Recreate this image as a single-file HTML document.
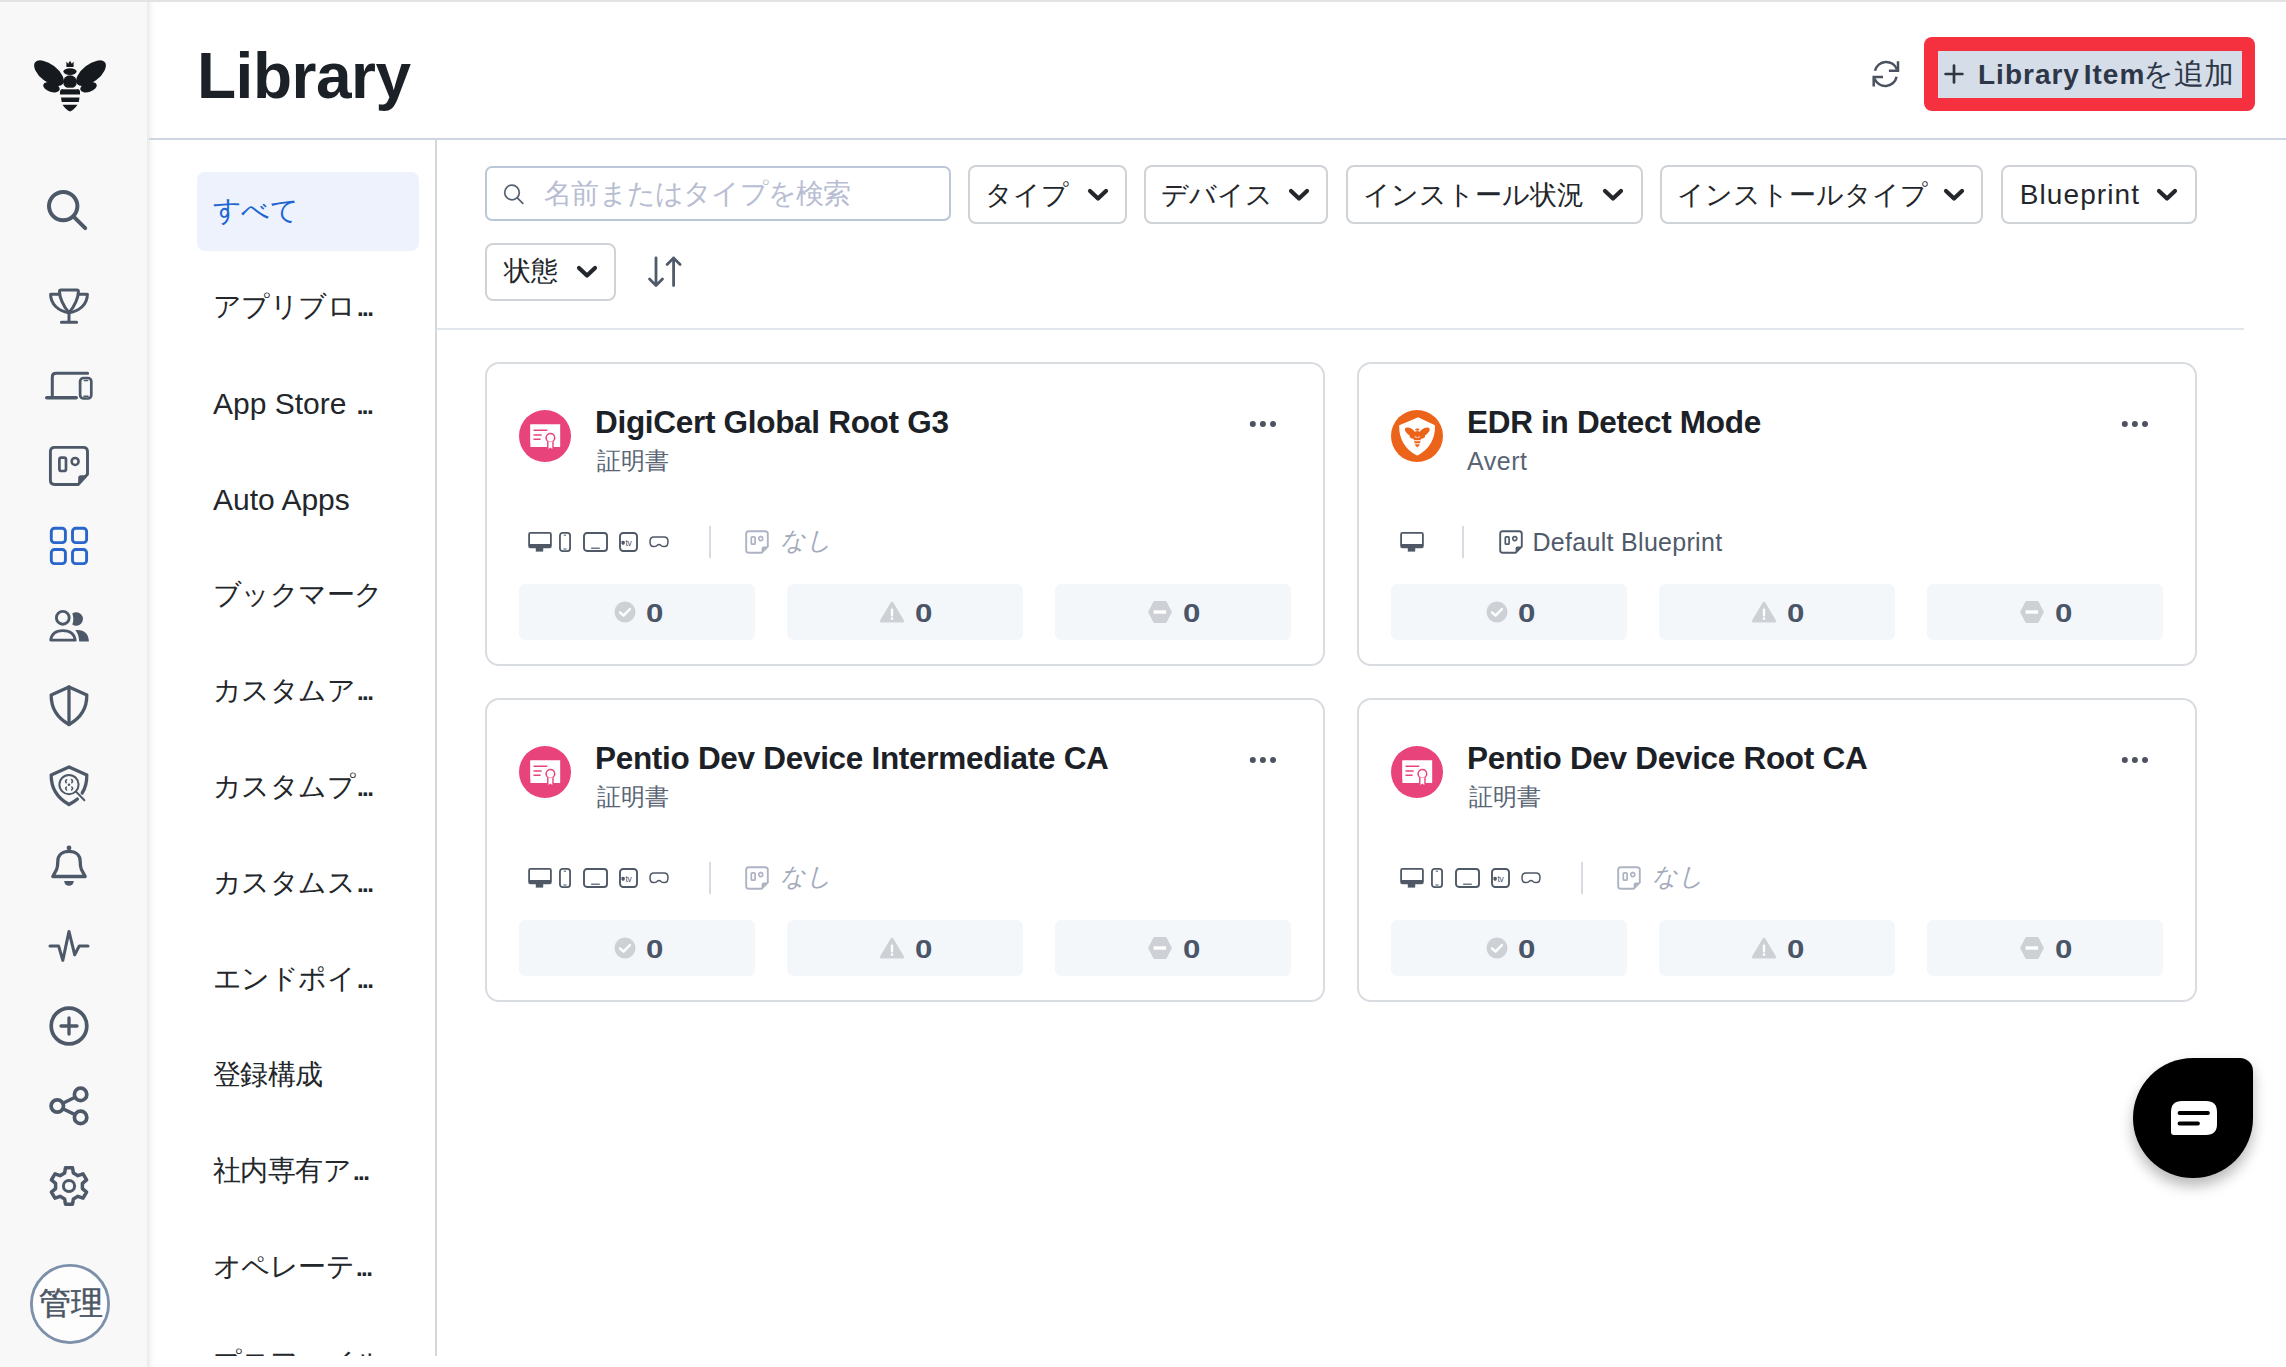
<!DOCTYPE html>
<html><head><meta charset="utf-8">
<style>
html,body{margin:0;padding:0}
body{width:2286px;height:1367px;overflow:hidden;position:relative;background:#fff;font-family:"Liberation Sans",sans-serif;color:#1f2328}
.abs{position:absolute}
#topline{left:0;top:0;width:2286px;height:2px;background:#e3e3e3}
#sidebar{left:0;top:2px;width:147px;height:1365px;background:#f8f8f8}
#sbshadow{left:147px;top:2px;width:8px;height:1365px;background:linear-gradient(to right,#e8e8e8 0,#f1f1f1 2px,#fafafa 5px,rgba(255,255,255,0) 8px)}
#sbsvg{position:absolute;left:0;top:0}
.ic{fill:none;stroke:#4d5868;stroke-linecap:round;stroke-linejoin:round}
.f{fill:#4d5868;stroke:none}
#hdrline{left:149px;top:138px;width:2137px;height:2px;background:#cdd6e0}
#title{left:197px;top:36px;font-size:64px;font-weight:bold;color:#1c2127;line-height:80px;letter-spacing:-0.5px}
#cats{left:149px;top:139px;width:287px;height:1217px;overflow:hidden}
#catline{left:435px;top:140px;width:2px;height:1216px;background:#d5d8db}
.cat{position:absolute;left:64px;font-size:27.8px;letter-spacing:-0.6px;line-height:40px;color:#23272b;white-space:nowrap}
.cat.lat{font-size:30px;letter-spacing:0}
.dots3{font-weight:bold;letter-spacing:-1.6px;font-size:24px;margin-left:2px}
#active{left:48px;top:33px;width:222px;height:79px;background:#edf2fd;border-radius:8px}

#refresh{position:absolute;left:1860px;top:50px}
#addbtn{left:1924px;top:37px;width:331px;height:74px;background:#f5303f;border-radius:8px}
#addbtn .in{position:absolute;left:14px;top:14px;width:304px;height:47px;background:#d5dde8}
#addbtn .tx{position:absolute;left:53px;top:10px;font-size:28px;font-weight:bold;color:#2d3748;line-height:40px;white-space:nowrap;letter-spacing:1px;word-spacing:-5px}
#addbtn .jp{font-weight:normal;font-size:29.5px;letter-spacing:-0.3px;margin-left:-2px}
#search{left:485.2px;top:166.4px;width:466px;height:55px;box-sizing:border-box;border:2px solid #b9c7d7;border-radius:7px}
#search .ph{position:absolute;left:57px;top:6px;font-size:28px;line-height:40px;color:#b7bdd2;white-space:nowrap;letter-spacing:-0.8px}
.dd{position:absolute;box-sizing:border-box;border:2px solid #cfd2d6;border-radius:8px}
.dd .t{position:absolute;left:15px;top:8px;font-size:27.4px;line-height:40px;color:#23272b;white-space:nowrap}
.dd svg{position:absolute;right:16.8px;top:21px}
#divider{left:437px;top:328px;width:1807px;height:2px;background:#e1e6ec}
.card{position:absolute;width:836px;height:300px;border:2px solid #d9dce1;border-radius:14px;background:#fff}
.ci{position:absolute;left:1px;top:1px;width:834px;height:298px}
.card .ttl{position:absolute;left:107px;top:33.2px;font-size:31.5px;font-weight:bold;color:#1c2127;line-height:48px;white-space:nowrap;letter-spacing:-0.3px}
.card .sub{position:absolute;left:109px;top:78px;font-size:24px;color:#596475;line-height:36px;white-space:nowrap}
.card .dots{position:absolute;left:759px;top:52px}
.card .devs{position:absolute;left:0;top:0}
.card .vdiv{position:absolute;left:222px;top:161px;width:2px;height:32px;background:#d6dce1}
.card .bp{position:absolute;left:296px;top:158px;font-size:26px;line-height:40px;white-space:nowrap}
.stat{position:absolute;top:219px;width:236px;height:56px;background:#f4f7fa;border-radius:6px}
.stat .n{position:absolute;top:9px;font-size:25px;font-weight:bold;color:#4a5568;line-height:40px;transform:scaleX(1.25);transform-origin:0 0}
#chat{left:2133px;top:1058px;width:120px;height:120px;background:#000;border-radius:60px 13px 60px 60px;box-shadow:0 8px 14px rgba(0,0,0,0.28)}
</style></head>
<body>
<div id="topline" class="abs"></div>
<div id="sidebar" class="abs"></div>
<div id="sbshadow" class="abs"></div>
<svg id="sbsvg" width="148" height="1367" viewBox="0 0 148 1367">
  <!-- bee logo -->
  <g fill="#16191d">
    <ellipse cx="49" cy="73.2" rx="17.6" ry="8.7" transform="rotate(38 49 73.2)"/>
    <ellipse cx="51.5" cy="87.2" rx="8.6" ry="4.7" transform="rotate(18 51.5 87.2)"/>
    <ellipse cx="91" cy="73.2" rx="17.6" ry="8.7" transform="rotate(-38 91 73.2)"/>
    <ellipse cx="88.5" cy="87.2" rx="8.6" ry="4.7" transform="rotate(-18 88.5 87.2)"/>
    <ellipse cx="70" cy="71.6" rx="6.6" ry="3.4"/>
    <circle cx="70" cy="82" r="6.8"/>
    <path d="M66.4 67 L66.4 61.5 L68.2 63.8 L70 60.8 L71.8 63.8 L73.6 61.5 L73.6 67 Z"/>
    <path d="M60 94.6 L60 92 Q60 89 63 89 L77 89 Q80 89 80 92 L80 94.6 Z"/>
    <path d="M61 97.4 H79.5 L78.8 101.9 H61.7 Z"/>
    <path d="M62.5 104.8 H77.5 Q74 110 70 111.5 Q66 110 62.5 104.8 Z"/>
  </g>
  <g stroke="#f7f7f8" stroke-width="1.6" fill="none">
    <path d="M63 88.5 L77 88.5"/>
  </g>
  <!-- search -->
  <g class="ic" stroke-width="4"><circle cx="63.2" cy="206.1" r="14.2"/><path d="M73.6 216.6 L85.2 228.1"/></g>
  <!-- trophy -->
  <g class="ic" stroke-width="3" transform="translate(38,275)">
    <path d="M31 37.8 C25 31 21.5 22 21.5 16.5 Q21.5 14.9 23 14.9 H39 Q40.4 14.9 40.4 16.5 C40.4 22 37 31 31 37.8 Z"/>
    <path d="M21.2 19.3 H12.6 C12.6 29 20 36 31 37.8 C42 36 49.4 29 49.4 19.3 H40.8"/>
    <path d="M31 37.8 V47.2 M23.4 47.2 H38.6"/>
  </g>
  <!-- devices -->
  <g class="ic" transform="translate(38,355)">
    <path d="M14.3 41.5 V22 Q14.3 18.2 18 18.2 H49.6" stroke-width="3"/>
    <path d="M8.8 42.8 H38.2" stroke-width="3.6"/>
    <rect x="42.1" y="23" width="11.2" height="20.5" rx="3.6" stroke-width="2.7"/>
    <path d="M46.3 25.6 H49.6 M45.9 41.2 H50" stroke-width="1.5"/>
  </g>
  <!-- blueprint -->
  <g class="ic" transform="translate(38,435)">
    <path d="M16.6 12.4 H45.2 Q49.5 12.4 49.5 16.7 V39.2 L40.2 49.5 H16.6 Q12.4 49.5 12.4 45.3 V16.6 Q12.4 12.4 16.6 12.4 Z" stroke-width="2.9"/>
    <path d="M40.2 49.5 V43 Q40.2 40.2 43 40.2 H49.5 Z" class="f"/>
    <rect x="21.4" y="22.6" width="6.6" height="13.4" rx="2" stroke-width="2.7"/>
    <circle cx="37.1" cy="26.4" r="3.5" stroke-width="2.5"/>
  </g>
  <!-- grid (active) -->
  <g fill="none" stroke="#2866cc" stroke-width="2.9" stroke-linejoin="round" transform="translate(38,515)">
    <rect x="13.3" y="13.3" width="14.1" height="14.3" rx="3.2"/>
    <rect x="34.5" y="13.3" width="14.1" height="14.3" rx="3.2"/>
    <rect x="13.3" y="34.5" width="14.1" height="14.1" rx="3.2"/>
    <rect x="34.5" y="34.5" width="14.1" height="14.1" rx="3.2"/>
  </g>
  <!-- users -->
  <g class="ic" transform="translate(38,595)">
    <circle cx="24.8" cy="22.8" r="6.4" stroke-width="2.9"/>
    <path d="M12.7 45.1 Q14 35.6 24.9 35.6 Q35.8 35.6 37.2 45.1 Z" stroke-width="2.9"/>
    <path class="f" d="M34.3 18.4 A6.8 6.8 0 1 1 34.3 29.6 A16 16 0 0 0 34.3 18.4 Z"/>
    <path class="f" d="M37.3 35 H39.5 Q50.3 35.2 50.9 46.5 H41.2 Q40.8 39.2 37.3 35 Z"/>
  </g>
  <!-- shield -->
  <g class="ic" stroke-width="3.3" transform="translate(38,675)">
    <path d="M31 12 L48.8 20 C49 33 42.5 43 31 49.5 C19.5 43 13 33 13.2 20 Z"/>
    <path d="M31 12 V49.5"/>
  </g>
  <!-- shield search -->
  <g class="ic" transform="translate(38,755)">
    <path d="M39.4 44 C36.8 46.3 34 48 31 49.5 C19.5 43 13 33 13.2 20 L31 12 L48.8 20 C48.9 27 47.4 33 44.2 38" stroke-width="3.3"/>
    <circle cx="31" cy="29.6" r="9.6" stroke-width="2"/>
    <path d="M38 36.6 L46.4 45.3" stroke-width="2"/>
    <circle cx="31" cy="29.8" r="1.3" class="f"/>
    <path d="M28.6 24.8 Q26.8 26 28.2 27.6 M33.6 24.6 Q35.3 26 33.8 27.6 M28.4 32.2 Q26.8 33.5 28.6 35 M33.8 32 Q35.4 33.5 33.6 35" stroke-width="1.6"/>
  </g>
  <!-- bell -->
  <g class="ic" transform="translate(38,835)">
    <path d="M14.8 41.5 L18.6 34.5 C19.6 32 19.8 29.5 19.8 26.5 C19.8 20 24.5 16.4 31 16.4 C37.5 16.4 42.2 20 42.2 26.5 C42.2 29.5 42.4 32 43.4 34.5 L47.2 41.5 Z" stroke-width="3.3"/>
    <circle cx="31" cy="13" r="2.4" class="f"/>
    <path d="M26.2 46 H35.8 A4.8 4.8 0 0 1 26.2 46 Z" class="f"/>
  </g>
  <!-- pulse -->
  <g class="ic" stroke-width="3" transform="translate(38,915)">
    <path d="M12 30.9 H20.6 L24.8 45.4 L31 16.4 L36.7 39.8 L41.3 30.9 H50"/>
  </g>
  <!-- plus circle -->
  <g class="ic" transform="translate(38,995)">
    <circle cx="31" cy="31" r="17.8" stroke-width="3.7"/>
    <path d="M23 31 H39 M31 23 V39" stroke-width="3.3"/>
  </g>
  <!-- share -->
  <g class="ic" stroke-width="3.7" transform="translate(38,1075)">
    <circle cx="19.3" cy="31" r="6.2"/><circle cx="42.6" cy="19.4" r="6.2"/><circle cx="42.6" cy="42.4" r="6.2"/>
    <path d="M24.9 28.2 L37 22.2 M24.9 33.8 L37 39.6" stroke-width="3.4"/>
  </g>
  <!-- gear -->
  <g class="ic" transform="translate(38,1155)">
    <path d="M27.5 12.7 L34.5 12.7 L35.4 18.1 L39.9 20.7 L45.0 18.8 L48.6 24.9 L44.4 28.4 L44.4 33.6 L48.6 37.1 L45.0 43.2 L39.9 41.3 L35.4 43.9 L34.5 49.3 L27.5 49.3 L26.6 43.9 L22.1 41.3 L17.0 43.2 L13.4 37.1 L17.6 33.6 L17.6 28.4 L13.4 24.9 L17.0 18.8 L22.1 20.7 L26.6 18.1 Z" stroke-width="3.5"/>
    <circle cx="31" cy="31" r="5.6" stroke-width="3"/>
  </g>
  <!-- avatar -->
  <circle cx="70" cy="1304" r="38.6" fill="#fdfdfe" stroke="#7c8fab" stroke-width="2.8"/>
  <text x="70.5" y="1314" text-anchor="middle" font-size="31.5" fill="#4b5565" stroke="#4b5565" stroke-width="0.5" font-family="Liberation Sans, sans-serif">管理</text>
</svg>

<div id="hdrline" class="abs"></div>
<div id="title" class="abs">Library</div>

<div id="cats" class="abs">
  <div id="active" class="abs"></div>
  <div class="cat" style="top:51.8px;color:#1f65d0">すべて</div>
  <div class="cat" style="top:147.8px">アプリブロ<span class="dots3">...</span></div>
  <div class="cat lat" style="top:245.1px">App Store <span class="dots3">...</span></div>
  <div class="cat lat" style="top:341.1px">Auto Apps</div>
  <div class="cat" style="top:435.8px">ブックマーク</div>
  <div class="cat" style="top:531.8px">カスタムア<span class="dots3">...</span></div>
  <div class="cat" style="top:627.8px">カスタムプ<span class="dots3">...</span></div>
  <div class="cat" style="top:723.8px">カスタムス<span class="dots3">...</span></div>
  <div class="cat" style="top:819.8px">エンドポイ<span class="dots3">...</span></div>
  <div class="cat" style="top:915.8px">登録構成</div>
  <div class="cat" style="top:1011.8px">社内専有ア<span class="dots3">...</span></div>
  <div class="cat" style="top:1107.8px">オペレーテ<span class="dots3">...</span></div>
  <div class="cat" style="top:1203.8px">プロファイル</div>
</div>
<div id="catline" class="abs"></div>


<svg id="refresh" width="50" height="50" viewBox="0 0 50 50" fill="none" stroke="#4a5260" stroke-width="2.5" stroke-linecap="butt">
  <path d="M15 20.8 A11.5 11.5 0 0 1 37 19.5"/>
  <path d="M38 11.3 V20.8 H28.9"/>
  <path d="M36.6 26.7 A11.5 11.5 0 0 1 14.6 28.6"/>
  <path d="M13.7 36.6 V26.9 H23"/>
</svg>
<div id="addbtn" class="abs"><div class="in"></div><svg style="position:absolute;left:20px;top:27px" width="20" height="20" viewBox="0 0 20 20"><path d="M10 1.6 V18.4 M1.6 10 H18.4" stroke="#2e3641" stroke-width="2.7" stroke-linecap="round"/></svg><div class="tx" style="left:54px;top:17px">Library Item<span class="jp">を追加</span></div></div>

<div id="search" class="abs">
  <svg style="position:absolute;left:13px;top:12px" width="30" height="30" viewBox="0 0 30 30" fill="none" stroke="#566170" stroke-width="1.7">
    <circle cx="12" cy="12.5" r="7.3"/><path d="M17.3 17.8 L22.8 23.3" stroke-linecap="round"/>
  </svg>
  <div class="ph">名前またはタイプを検索</div>
</div>

<div class="dd" style="left:968.3px;width:159px;top:164.5px;height:59px"><div class="t">タイプ</div><svg width="22" height="14" viewBox="0 0 22 14"><path d="M3 3 L11 10.5 L19 3" fill="none" stroke="#23272b" stroke-width="4.2" stroke-linecap="round" stroke-linejoin="round"/></svg></div>
<div class="dd" style="left:1144.3px;width:184px;top:164.5px;height:59px"><div class="t">デバイス</div><svg width="22" height="14" viewBox="0 0 22 14"><path d="M3 3 L11 10.5 L19 3" fill="none" stroke="#23272b" stroke-width="4.2" stroke-linecap="round" stroke-linejoin="round"/></svg></div>
<div class="dd" style="left:1345.6px;width:297px;top:164.5px;height:59px"><div class="t">インストール状況</div><svg width="22" height="14" viewBox="0 0 22 14"><path d="M3 3 L11 10.5 L19 3" fill="none" stroke="#23272b" stroke-width="4.2" stroke-linecap="round" stroke-linejoin="round"/></svg></div>
<div class="dd" style="left:1660.4px;width:323px;top:164.5px;height:59px"><div class="t">インストールタイプ</div><svg width="22" height="14" viewBox="0 0 22 14"><path d="M3 3 L11 10.5 L19 3" fill="none" stroke="#23272b" stroke-width="4.2" stroke-linecap="round" stroke-linejoin="round"/></svg></div>
<div class="dd" style="left:2000.7px;width:196px;top:164.5px;height:59px"><div class="t" style="font-size:28px;left:17px;letter-spacing:1.1px">Blueprint</div><svg width="22" height="14" viewBox="0 0 22 14"><path d="M3 3 L11 10.5 L19 3" fill="none" stroke="#23272b" stroke-width="4.2" stroke-linecap="round" stroke-linejoin="round"/></svg></div>
<div class="dd" style="left:485.2px;width:131px;top:242.5px;height:58.5px"><div class="t" style="left:17.3px;top:6.6px">状態</div><svg style="right:15.8px;top:20px" width="22" height="14" viewBox="0 0 22 14"><path d="M3 3 L11 10.5 L19 3" fill="none" stroke="#23272b" stroke-width="4.2" stroke-linecap="round" stroke-linejoin="round"/></svg></div>
<svg class="abs" style="left:640px;top:250px" width="50" height="44" viewBox="0 0 50 44" fill="none" stroke="#4f5a6a" stroke-width="2.8" stroke-linecap="round" stroke-linejoin="round">
  <path d="M16 8 V35.5 M9.5 29 L16 35.5 L22.5 29"/>
  <path d="M33.6 35.5 V8 M27.1 14.5 L33.6 8 L40.1 14.5"/>
</svg>
<div id="divider" class="abs"></div>

<svg width="0" height="0" style="position:absolute">
<defs>
  <symbol id="monitor" viewBox="0 0 24 20">
    <path d="M2.4 0 H21.6 Q23.8 0 23.8 2.2 V14 Q23.8 16.2 21.6 16.2 H2.4 Q0.2 16.2 0.2 14 V2.2 Q0.2 0 2.4 0 Z M2 1.8 V11.9 H22 V1.8 Z" fill="#4f5866" fill-rule="evenodd"/>
    <rect x="7.8" y="16" width="7.4" height="3.6" fill="#4f5866"/>
  </symbol>
  <symbol id="phone" viewBox="0 0 12 20">
    <rect x="0.95" y="0.95" width="10.1" height="18.1" rx="2.6" fill="none" stroke="#4f5866" stroke-width="1.8"/>
    <path d="M4.8 3.2 H7.2 M4.3 17 H7.7" stroke="#4f5866" stroke-width="1"/>
  </symbol>
  <symbol id="ipad" viewBox="0 0 25 20">
    <rect x="1" y="1" width="23" height="18" rx="3" fill="none" stroke="#4f5866" stroke-width="1.9"/>
    <path d="M8.1 16.2 H16.8" stroke="#4f5866" stroke-width="1.2"/>
  </symbol>
  <symbol id="tv" viewBox="0 0 19 20">
    <rect x="1" y="1" width="17" height="18" rx="3.2" fill="none" stroke="#4f5866" stroke-width="1.9"/>
    <path d="M2.6 9.3 Q3.4 8.6 4.1 9 Q4.8 8.6 5.6 9.3 Q5.9 10.2 5.7 11.4 Q5.2 13 4.1 12.7 Q3 13 2.5 11.4 Q2.3 10.2 2.6 9.3 Z" fill="#4f5866"/>
    <text x="6.4" y="13.6" font-size="8.6" fill="#4f5866" font-family="Liberation Sans, sans-serif" letter-spacing="-0.3">tv</text>
  </symbol>
  <symbol id="vision" viewBox="0 0 20 12">
    <path d="M5 1 H15 Q19 1 19 5.5 Q19 10.6 15.5 10.6 Q13 10.6 11.6 9.2 Q10 8 8.4 9.2 Q7 10.6 4.5 10.6 Q1 10.6 1 5.5 Q1 1 5 1 Z" fill="none" stroke="#4f5866" stroke-width="1.5"/>
  </symbol>
  <symbol id="bpic" viewBox="0 0 24 24">
    <path d="M3.6 1.2 H20.2 Q22.8 1.2 22.8 3.8 V16.6 L16.6 22.8 H3.6 Q1.2 22.8 1.2 20.4 V3.6 Q1.2 1.2 3.6 1.2 Z" fill="none" stroke="currentColor" stroke-width="1.9" stroke-linejoin="round"/>
    <path d="M16.6 22.8 V18.5 Q16.6 16.6 18.5 16.6 H22.8 Z" fill="currentColor"/>
    <rect x="6.3" y="6.8" width="3.8" height="7.4" rx="1" fill="none" stroke="currentColor" stroke-width="1.7"/>
    <circle cx="15.8" cy="8.6" r="2" fill="none" stroke="currentColor" stroke-width="1.6"/>
  </symbol>
  <symbol id="cert" viewBox="0 0 52 52">
    <circle cx="26" cy="26" r="26" fill="#e8437a"/>
    <path d="M11.4 14.5 H41.1 V37 H32.5 V33 H11.4 Z" fill="#fff"/>
    <rect x="11.4" y="14.5" width="29.7" height="22.5" fill="#fff"/>
    <path d="M14.5 20.3 H28.3 M14.5 25 H22.7 M14.5 29.3 H21.6" stroke="#e8437a" stroke-width="1.6"/>
    <circle cx="31.4" cy="27.8" r="4.3" fill="#fff" stroke="#e8437a" stroke-width="1.5"/>
    <path d="M28.8 31.5 V40.5 L31.4 38.3 L34 40.5 V31.5" fill="#fff" stroke="#e8437a" stroke-width="1.4"/>
  </symbol>
  <symbol id="edr" viewBox="0 0 52 52">
    <circle cx="26" cy="26" r="26" fill="#ec6419"/>
    <path d="M27.1 8.3 L43 15.9 C43.2 29 37 38.5 26.1 44.5 C15.4 38.5 9 29 9.2 15.9 Z" fill="#fff" stroke="#fff" stroke-width="2" stroke-linejoin="round"/>
    <g fill="#ec6419">
      <ellipse cx="19.4" cy="22" rx="6.4" ry="3.3" transform="rotate(35 19.4 22)"/>
      <ellipse cx="21.3" cy="26.8" rx="3" ry="1.7" transform="rotate(20 21.3 26.8)"/>
      <ellipse cx="33.2" cy="22" rx="6.4" ry="3.3" transform="rotate(-35 33.2 22)"/>
      <ellipse cx="31.3" cy="26.8" rx="3" ry="1.7" transform="rotate(-20 31.3 26.8)"/>
      <ellipse cx="26.3" cy="19.6" rx="2.2" ry="1.1"/>
      <circle cx="26.3" cy="24" r="3"/>
      <path d="M22.8 27.6 H29.8 V30.2 H22.8 Z M23.1 31.2 H29.5 L29.1 33.2 H23.5 Z M23.7 34.2 H28.9 Q27.6 36.8 26.3 37.4 Q25 36.8 23.7 34.2 Z"/>
    </g>
  </symbol>
  <symbol id="okic" viewBox="0 0 22 22">
    <circle cx="11" cy="11" r="10.5" fill="#cdd1d6"/>
    <path d="M6 11.3 L9.5 14.6 L16 8" fill="none" stroke="#fff" stroke-width="2.4" stroke-linecap="round" stroke-linejoin="round"/>
  </symbol>
  <symbol id="warnic" viewBox="0 0 26 22">
    <path d="M13 0.8 Q14 0.8 14.8 2.2 L25 19.8 Q25.5 21.5 23.8 21.5 H2.2 Q0.5 21.5 1 19.8 L11.2 2.2 Q12 0.8 13 0.8 Z" fill="#cdd1d6"/>
    <path d="M13 8.6 V14.6" stroke="#fff" stroke-width="2.3" stroke-linecap="round"/>
    <circle cx="13" cy="17.6" r="1.3" fill="#fff"/>
  </symbol>
  <symbol id="stopic" viewBox="0 0 24 22">
    <path d="M6 0.5 H18 L23.4 11 L18 21.5 H6 L0.6 11 Z" fill="#cdd1d6" stroke="#cdd1d6" stroke-width="1" stroke-linejoin="round"/>
    <rect x="5.6" y="9.3" width="12.5" height="3.4" fill="#fff"/>
  </symbol>
</defs>
</svg>
<div class="card" style="left:485px;top:362px"><div class="ci">
<svg style="position:absolute;left:31px;top:45px" width="52" height="52"><use href="#cert"/></svg>
<div class="ttl">DigiCert Global Root G3</div>
<div class="sub">証明書</div>
<svg class="dots" width="32" height="14" viewBox="0 0 32 14"><circle cx="5.8" cy="7" r="3" fill="#4e5363"/><circle cx="15.9" cy="7" r="3" fill="#4e5363"/><circle cx="26" cy="7" r="3" fill="#4e5363"/></svg>
<svg style="position:absolute;left:39.700000000000045px;top:167px" width="24" height="20"><use href="#monitor"/></svg><svg style="position:absolute;left:71.20000000000005px;top:167.29999999999995px" width="12" height="20"><use href="#phone"/></svg><svg style="position:absolute;left:95.29999999999995px;top:167.29999999999995px" width="25" height="20"><use href="#ipad"/></svg><svg style="position:absolute;left:131px;top:167.29999999999995px" width="19" height="20"><use href="#tv"/></svg><svg style="position:absolute;left:160.79999999999995px;top:171.20000000000005px" width="20" height="12"><use href="#vision"/></svg>
<div style="position:absolute;left:221px;top:161px;width:2px;height:32px;background:#d6dce1"></div>
<svg style="position:absolute;left:257.4px;top:165px;color:#aeb3c4" width="24" height="24"><use href="#bpic"/></svg>
<div class="bp" style="left:291.6px;color:#a4aabb;font-style:italic;font-size:25px;margin-top:-3px">なし</div>
<div class="stat" style="left:31px"><svg style="position:absolute;left:95px;top:17px" width="22" height="22"><use href="#okic"/></svg><div class="n" style="left:127px">0</div></div>
<div class="stat" style="left:299px"><svg style="position:absolute;left:92px;top:17px" width="26" height="22"><use href="#warnic"/></svg><div class="n" style="left:128px">0</div></div>
<div class="stat" style="left:567px"><svg style="position:absolute;left:93px;top:17px" width="24" height="22"><use href="#stopic"/></svg><div class="n" style="left:128px">0</div></div>
</div></div>
<div class="card" style="left:1357px;top:362px"><div class="ci">
<svg style="position:absolute;left:31px;top:45px" width="52" height="52"><use href="#edr"/></svg>
<div class="ttl">EDR in Detect Mode</div>
<div class="sub" style="font-size:25px;letter-spacing:0.5px;margin-left:-2px">Avert</div>
<svg class="dots" width="32" height="14" viewBox="0 0 32 14"><circle cx="5.8" cy="7" r="3" fill="#4e5363"/><circle cx="15.9" cy="7" r="3" fill="#4e5363"/><circle cx="26" cy="7" r="3" fill="#4e5363"/></svg>
<svg style="position:absolute;left:39.700000000000045px;top:167px" width="24" height="20"><use href="#monitor"/></svg>
<div style="position:absolute;left:102px;top:161px;width:2px;height:32px;background:#d6dce1"></div>
<svg style="position:absolute;left:138.5px;top:165px;color:#4f5a6a" width="24" height="24"><use href="#bpic"/></svg>
<div class="bp" style="left:172.5px;color:#4f5a6a;font-size:25px;letter-spacing:0.3px;margin-top:-1px">Default Blueprint</div>
<div class="stat" style="left:31px"><svg style="position:absolute;left:95px;top:17px" width="22" height="22"><use href="#okic"/></svg><div class="n" style="left:127px">0</div></div>
<div class="stat" style="left:299px"><svg style="position:absolute;left:92px;top:17px" width="26" height="22"><use href="#warnic"/></svg><div class="n" style="left:128px">0</div></div>
<div class="stat" style="left:567px"><svg style="position:absolute;left:93px;top:17px" width="24" height="22"><use href="#stopic"/></svg><div class="n" style="left:128px">0</div></div>
</div></div>
<div class="card" style="left:485px;top:698px"><div class="ci">
<svg style="position:absolute;left:31px;top:45px" width="52" height="52"><use href="#cert"/></svg>
<div class="ttl">Pentio Dev Device Intermediate CA</div>
<div class="sub">証明書</div>
<svg class="dots" width="32" height="14" viewBox="0 0 32 14"><circle cx="5.8" cy="7" r="3" fill="#4e5363"/><circle cx="15.9" cy="7" r="3" fill="#4e5363"/><circle cx="26" cy="7" r="3" fill="#4e5363"/></svg>
<svg style="position:absolute;left:39.700000000000045px;top:167px" width="24" height="20"><use href="#monitor"/></svg><svg style="position:absolute;left:71.20000000000005px;top:167.29999999999995px" width="12" height="20"><use href="#phone"/></svg><svg style="position:absolute;left:95.29999999999995px;top:167.29999999999995px" width="25" height="20"><use href="#ipad"/></svg><svg style="position:absolute;left:131px;top:167.29999999999995px" width="19" height="20"><use href="#tv"/></svg><svg style="position:absolute;left:160.79999999999995px;top:171.20000000000005px" width="20" height="12"><use href="#vision"/></svg>
<div style="position:absolute;left:221px;top:161px;width:2px;height:32px;background:#d6dce1"></div>
<svg style="position:absolute;left:257.4px;top:165px;color:#aeb3c4" width="24" height="24"><use href="#bpic"/></svg>
<div class="bp" style="left:291.6px;color:#a4aabb;font-style:italic;font-size:25px;margin-top:-3px">なし</div>
<div class="stat" style="left:31px"><svg style="position:absolute;left:95px;top:17px" width="22" height="22"><use href="#okic"/></svg><div class="n" style="left:127px">0</div></div>
<div class="stat" style="left:299px"><svg style="position:absolute;left:92px;top:17px" width="26" height="22"><use href="#warnic"/></svg><div class="n" style="left:128px">0</div></div>
<div class="stat" style="left:567px"><svg style="position:absolute;left:93px;top:17px" width="24" height="22"><use href="#stopic"/></svg><div class="n" style="left:128px">0</div></div>
</div></div>
<div class="card" style="left:1357px;top:698px"><div class="ci">
<svg style="position:absolute;left:31px;top:45px" width="52" height="52"><use href="#cert"/></svg>
<div class="ttl">Pentio Dev Device Root CA</div>
<div class="sub">証明書</div>
<svg class="dots" width="32" height="14" viewBox="0 0 32 14"><circle cx="5.8" cy="7" r="3" fill="#4e5363"/><circle cx="15.9" cy="7" r="3" fill="#4e5363"/><circle cx="26" cy="7" r="3" fill="#4e5363"/></svg>
<svg style="position:absolute;left:39.700000000000045px;top:167px" width="24" height="20"><use href="#monitor"/></svg><svg style="position:absolute;left:71.20000000000005px;top:167.29999999999995px" width="12" height="20"><use href="#phone"/></svg><svg style="position:absolute;left:95.29999999999995px;top:167.29999999999995px" width="25" height="20"><use href="#ipad"/></svg><svg style="position:absolute;left:131px;top:167.29999999999995px" width="19" height="20"><use href="#tv"/></svg><svg style="position:absolute;left:160.79999999999995px;top:171.20000000000005px" width="20" height="12"><use href="#vision"/></svg>
<div style="position:absolute;left:221px;top:161px;width:2px;height:32px;background:#d6dce1"></div>
<svg style="position:absolute;left:257.4px;top:165px;color:#aeb3c4" width="24" height="24"><use href="#bpic"/></svg>
<div class="bp" style="left:291.6px;color:#a4aabb;font-style:italic;font-size:25px;margin-top:-3px">なし</div>
<div class="stat" style="left:31px"><svg style="position:absolute;left:95px;top:17px" width="22" height="22"><use href="#okic"/></svg><div class="n" style="left:127px">0</div></div>
<div class="stat" style="left:299px"><svg style="position:absolute;left:92px;top:17px" width="26" height="22"><use href="#warnic"/></svg><div class="n" style="left:128px">0</div></div>
<div class="stat" style="left:567px"><svg style="position:absolute;left:93px;top:17px" width="24" height="22"><use href="#stopic"/></svg><div class="n" style="left:128px">0</div></div>
</div></div>
<div id="chat" class="abs"><svg style="position:absolute;left:38px;top:43px" width="46" height="35" viewBox="0 0 46 35"><path d="M0 11 Q0 0 11 0 H35 Q46 0 46 11 V23 Q46 34 35 34 H3 Q0 34 0 31 Z" fill="#fff"/><path d="M8.5 12 H37 M8.5 22.5 H27" stroke="#000" stroke-width="3.8" stroke-linecap="round"/></svg></div>
</body></html>
